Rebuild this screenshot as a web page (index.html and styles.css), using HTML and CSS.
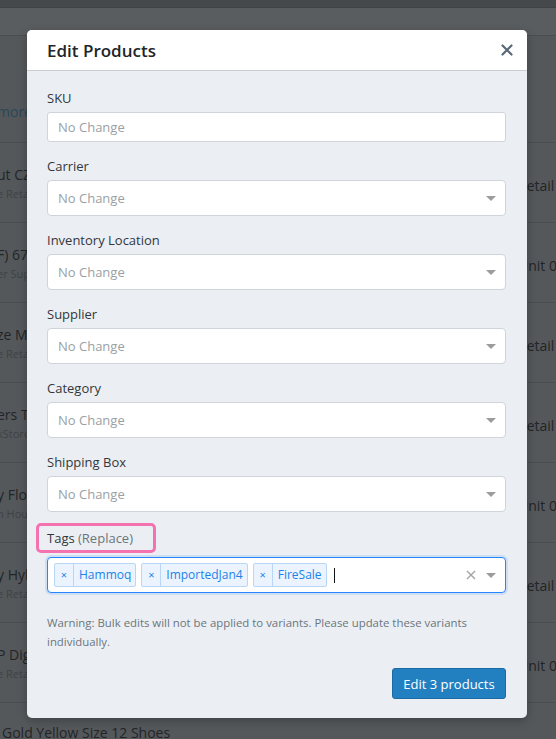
FILE: index.html
```html
<!DOCTYPE html>
<html>
<head>
<meta charset="utf-8">
<link rel="stylesheet" href="styles.css">
</head>
<body>
<div class="page">
  <div class="topbar"></div>
  <div class="subbar"></div>
  <div class="row row-first"><div class="left"><span class="link cut">more filters</span></div></div>
  <div class="row"><div class="left"><div class="main cut">ut CZ 75 Shadow 2 Pistol</div><div class="sub cut">e Retail</div></div><div class="right">Retail Store</div></div>
  <div class="row"><div class="left"><div class="main cut">F) 67 Ruger Ammo</div><div class="sub cut">er Supply</div></div><div class="right">Unit 01</div></div>
  <div class="row"><div class="left"><div class="main cut">ze M Hoodie Black</div><div class="sub cut">e Retail</div></div><div class="right">Retail Store</div></div>
  <div class="row"><div class="left"><div class="main cut">ers T Shirt Blue</div><div class="sub cut">kStore Goods</div></div><div class="right">Retail Store</div></div>
  <div class="row"><div class="left"><div class="main cut">y Floral Dress</div><div class="sub cut">n House</div></div><div class="right">Unit 01</div></div>
  <div class="row"><div class="left"><div class="main cut">y Hybrid Bike</div><div class="sub cut">e Retail</div></div><div class="right">Retail Store</div></div>
  <div class="row"><div class="left"><div class="main cut">P Digital Camera</div><div class="sub cut">e Retail</div></div><div class="right">Unit 04</div></div>
  <div class="row row-last"><div class="left"><div class="main">Gold Yellow Size 12 Shoes</div></div></div>
</div>

<div class="overlay">
  <div class="modal">
    <div class="modal-header">
      <h2 class="modal-title">Edit Products</h2>
      <svg class="close" width="12" height="12" viewBox="0 0 12 12"><path d="M1.5 1.5L10.5 10.5M10.5 1.5L1.5 10.5" stroke="#5a6876" stroke-width="2.2" stroke-linecap="round"/></svg>
    </div>
    <div class="modal-body">
      <div class="field">
        <label class="label">SKU</label>
        <div class="input">No Change</div>
      </div>
      <div class="field">
        <label class="label">Carrier</label>
        <div class="select"><span class="placeholder">No Change</span><span class="caret"></span></div>
      </div>
      <div class="field">
        <label class="label">Inventory Location</label>
        <div class="select"><span class="placeholder">No Change</span><span class="caret"></span></div>
      </div>
      <div class="field">
        <label class="label">Supplier</label>
        <div class="select"><span class="placeholder">No Change</span><span class="caret"></span></div>
      </div>
      <div class="field">
        <label class="label">Category</label>
        <div class="select"><span class="placeholder">No Change</span><span class="caret"></span></div>
      </div>
      <div class="field">
        <label class="label">Shipping Box</label>
        <div class="select"><span class="placeholder">No Change</span><span class="caret"></span></div>
      </div>
      <div class="field field-tags">
        <label class="label label-hl">Tags <span class="muted">(Replace)</span></label>
        <div class="select select-focus">
          <div class="chips">
            <span class="chip"><span class="chip-x">×</span><span class="chip-text">Hammoq</span></span>
            <span class="chip"><span class="chip-x">×</span><span class="chip-text">ImportedJan4</span></span>
            <span class="chip"><span class="chip-x">×</span><span class="chip-text">FireSale</span></span>
            <span class="cursor"></span>
          </div>
          <svg class="clear" width="10" height="10" viewBox="0 0 10 10"><path d="M1 1L9 9M9 1L1 9" stroke="#a3a3a3" stroke-width="1.4"/></svg>
          <span class="caret"></span>
        </div>
      </div>
      <p class="warning">Warning: Bulk edits will not be applied to variants. Please update these variants individually.</p>
      <div class="actions">
        <button class="btn">Edit 3 products</button>
      </div>
    </div>
  </div>
</div>
</body>
</html>
```
FILE: styles.css
```css
* { box-sizing: border-box; }
html, body { margin: 0; padding: 0; }
body {
  width: 556px;
  height: 739px;
  overflow: hidden;
  background: #55585b;
  font-family: "Open Sans", "Noto Sans", sans-serif;
  position: relative;
}

/* background page (dimmed) */
.page { width: 556px; }
.topbar { height: 8px; background: #46494c; border-bottom: 1px solid #404346; }
.subbar { height: 28px; background: #5a5d60; border-bottom: 1px solid #4b4e51; }
.row {
  height: 80px;
  display: flex;
  border-bottom: 1px solid #4b4e51;
  overflow: hidden;
  white-space: nowrap;
}
.row-first { height: 107px; }
.row-last { border-bottom: none; }
.left { width: 518px; flex-shrink: 0; padding-top: 22px; overflow: hidden; }
.row-first .left { padding-top: 66px; }
.row-last .left { padding-top: 20px; padding-left: 2px; }
.cut { margin-left: -3px; }
.main { font-size: 14px; line-height: 20px; color: #222527; }
.sub { font-size: 11px; line-height: 18px; color: #3f4245; }
.link { font-size: 14px; line-height: 20px; color: #2b4657; display: block; }
.right { flex-shrink: 0; align-self: center; font-size: 14px; color: #222527; padding-top: 6px; }

/* modal */
.overlay {
  position: absolute;
  top: 0; left: 0;
  width: 556px; height: 739px;
  padding: 30px 0 0 27px;
}
.modal {
  width: 500px;
  background: #ebeff3;
  border-radius: 5px;
  overflow: hidden;
  box-shadow: 0 3px 10px rgba(0,0,0,0.25);
}
.modal-header {
  height: 41px;
  background: #fff;
  border-bottom: 1px solid #c9cdd1;
  display: flex;
  align-items: center;
  justify-content: space-between;
  padding: 0 14px 0 20px;
}
.modal-title {
  margin: 0;
  font-size: 17px;
  font-weight: 600;
  color: #212529;
}
.close { display: block; }

.modal-body { padding: 17px 21px 19px 20px; }
.field { margin-bottom: 14px; }
.label {
  display: block;
  font-size: 13px;
  line-height: 20px;
  color: #33373b;
  margin-bottom: 4px;
}
.label-hl {
  display: inline-block;
  margin: -6px 0 4px -11px;
  padding: 2px 8px;
  border: 3px solid #f472b0;
  border-radius: 5px;
  width: 120px;
}
.muted { color: #6c757d; }

.input {
  height: 30px;
  background: #fff;
  border: 1px solid #ced4da;
  border-radius: 3px;
  padding: 0 10px;
  font-size: 13px;
  line-height: 28px;
  color: #9a9fa4;
}
.select {
  height: 36px;
  background: #fff;
  border: 1px solid #ced4da;
  border-radius: 4px;
  display: flex;
  align-items: center;
  padding: 0 9px 0 10px;
}
.placeholder { flex: 1; font-size: 13px; color: #9a9fa4; }
.caret {
  width: 0; height: 0;
  border-left: 5px solid transparent;
  border-right: 5px solid transparent;
  border-top: 5px solid #9c9c9c;
}
.select-focus {
  border-color: #2684ff;
  box-shadow: 0 0 0 2px rgba(38,132,255,0.15);
  padding-left: 6px;
}
.chips { flex: 1; display: flex; align-items: center; gap: 5px; }
.chip {
  display: flex;
  height: 24px;
  border: 1px solid #b9d6f5;
  border-radius: 2px;
  background: #ebf4fe;
  color: #1d82e8;
  font-size: 12px;
  line-height: 22px;
}
.chip-x {
  width: 19px;
  text-align: center;
  border-right: 1px solid #b9d6f5;
  font-size: 11px;
}
.chip-text { padding: 0 4px 0 5px; }
.cursor { width: 1px; height: 15px; background: #111; margin-left: 2px; }
.clear { margin-right: 10px; }

.warning {
  margin: 20px 0 0;
  font-size: 11.4px;
  line-height: 19px;
  color: #6c757d;
}
.actions { display: flex; justify-content: flex-end; margin-top: 17px; }
.btn {
  height: 31px;
  width: 114px;
  background: #2280c1;
  border: 1px solid #1a6aa3;
  border-radius: 3px;
  color: #fff;
  font-family: inherit;
  font-size: 13px;
  padding: 0;
}
```
